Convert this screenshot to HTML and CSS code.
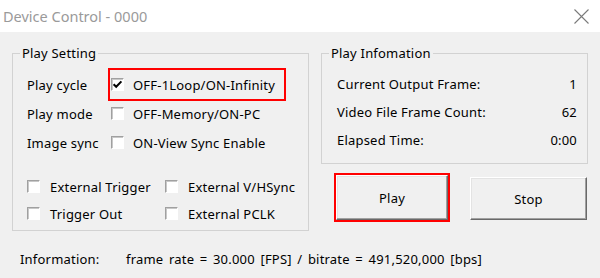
FILE: index.html
```html
<!DOCTYPE html>
<html>
<head>
<meta charset="utf-8">
<title>Device Control - 0000</title>
<link rel="stylesheet" href="styles.css">
</head>
<body>
<div class="window">
  <header class="titlebar">
    <span class="title">Device Control - 0000</span>
    <svg class="close" width="15" height="15" viewBox="0 0 15 15" aria-label="Close">
      <path d="M0.5 0.5L14.5 14.5M14.5 0.5L0.5 14.5" stroke="#7a7a7a" stroke-width="1.1" fill="none"/>
    </svg>
  </header>
  <main class="client">
    <div class="groups">
      <fieldset class="group setting">
        <legend>Play Setting</legend>
        <div class="opts">
          <div class="row">
            <span class="lbl">Play cycle</span>
            <span class="chk hl">
              <span class="box"><svg width="11" height="11" viewBox="0 0 11 11"><path d="M1.6 5.2L4.2 7.8L9.4 2.4" stroke="#000" stroke-width="2" fill="none"/></svg></span>
              <span>OFF-1Loop/ON-Infinity</span>
            </span>
          </div>
          <div class="row">
            <span class="lbl">Play mode</span>
            <span class="chk"><span class="box"></span><span>OFF-Memory/ON-PC</span></span>
          </div>
          <div class="row">
            <span class="lbl">Image sync</span>
            <span class="chk"><span class="box"></span><span>ON-View Sync Enable</span></span>
          </div>
        </div>
        <div class="ext">
          <span class="chk"><span class="box"></span><span>External Trigger</span></span>
          <span class="chk"><span class="box"></span><span>External V/HSync</span></span>
          <span class="chk"><span class="box"></span><span>Trigger Out</span></span>
          <span class="chk"><span class="box"></span><span>External PCLK</span></span>
        </div>
      </fieldset>
      <div class="right">
        <fieldset class="group info">
          <legend>Play Infomation</legend>
          <div class="irows">
            <div class="irow"><span>Current Output Frame:</span><span>1</span></div>
            <div class="irow"><span>Video File Frame Count:</span><span>62</span></div>
            <div class="irow"><span>Elapsed Time:</span><span>0:00</span></div>
          </div>
        </fieldset>
        <div class="buttons">
          <button class="btn play">Play</button>
          <button class="btn stop">Stop</button>
        </div>
      </div>
    </div>
    <div class="status">
      <span class="k">Information:</span>
      <span class="v">frame rate = 30.000 [FPS] / bitrate = 491,520,000 [bps]</span>
    </div>
  </main>
</div>
</body>
</html>
```
FILE: styles.css
```css
* { box-sizing: border-box; }
html, body { margin: 0; padding: 0; }
body {
  width: 600px;
  height: 278px;
  overflow: hidden;
  background: #f0f0f0;
  font-family: "Noto Sans", "DejaVu Sans", sans-serif;
  font-size: 13px;
  line-height: 16px;
  letter-spacing: 0.2px;
  color: #000;
}
.titlebar {
  height: 32px;
  background: #fff;
  display: flex;
  align-items: center;
  justify-content: space-between;
  padding: 0 11px 0 3px;
}
.title { color: #9a9a9a; font-size: 14.5px; letter-spacing: 0; }
.client { padding: 13px 12px 0 12px; }
.groups { display: flex; gap: 12px; align-items: flex-start; }
fieldset.group {
  margin: 0;
  padding: 0 7px;
  border: 1px solid #d2d2d2;
  min-width: 0;
}
fieldset.group legend {
  padding: 0 2px;
  line-height: 16px;
}
.setting { width: 297px; }
.opts { padding-top: 9px; }
.row {
  height: 29px;
  display: flex;
  align-items: center;
  padding-left: 7px;
}
.lbl { width: 84px; flex: none; }
.chk { display: flex; align-items: center; gap: 9px; white-space: nowrap; }
.chk.hl {
  border: 2px solid #ff0000;
  height: 33px;
  width: 178px;
  margin-left: -3px;
  padding-left: 1px;
  flex: none;
}
.box {
  width: 13px;
  height: 13px;
  flex: none;
  background: #fff;
  border: 1px solid;
  border-color: #a0a0a0 #fff #fff #a0a0a0;
  box-shadow: inset 1px 1px 0 #c8c8c8;
  display: flex;
  align-items: center;
  justify-content: center;
}
.ext {
  display: grid;
  grid-template-columns: 138px auto;
  grid-auto-rows: 27px;
  padding: 16px 0 3px 7px;
}
.ext .chk { gap: 10px; }
.right { width: 267px; }
.info { width: 267px; }
.irows { padding: 9px 3px 9px 8px; }
.irow {
  height: 28px;
  display: flex;
  align-items: center;
  justify-content: space-between;
}
.buttons {
  display: flex;
  align-items: flex-start;
  gap: 22px;
  margin-top: 11px;
  padding-left: 15px;
}
.btn {
  font: inherit;
  letter-spacing: inherit;
  color: #000;
  width: 117px;
  height: 43px;
  padding: 0;
  background: #f0f0f0;
  border: 1px solid;
  border-color: #fff #696969 #696969 #fff;
  box-shadow: inset -1px -1px 0 #a0a0a0, inset 1px 1px 0 #e3e3e3;
}
.btn.play {
  width: 112px;
  height: 45px;
  outline: 2px solid #ff0000;
}
.btn.stop { margin-top: 2px; }
.status {
  display: flex;
  padding-left: 8px;
  margin-top: 20px;
}
.status .k { width: 106px; flex: none; }
.status .v { word-spacing: 2px; }
```
